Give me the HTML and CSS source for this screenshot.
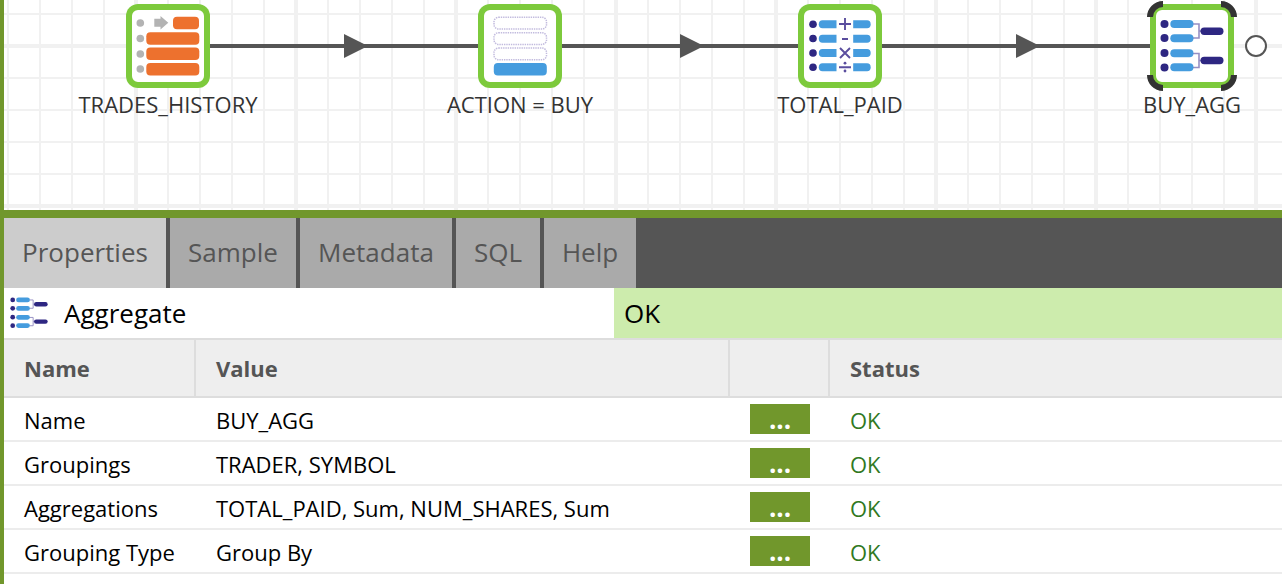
FILE: index.html
```html
<!DOCTYPE html>
<html lang="en">
<head>
<meta charset="utf-8">
<title>Aggregate</title>
<link rel="stylesheet" href="styles.css">
</head>
<body>
<svg width="0" height="0" class="defs">
  <symbol id="agg" viewBox="0 0 64 54">
    <g fill="none" stroke="#968fc4" stroke-width="1.600">
      <path d="M32.500 5H39V19H32.500M39 12H42M32.500 34.500H39V48.500H32.500M39 41.500H42"/>
    </g>
    <g fill="#2e2782">
      <circle cx="4.500" cy="5" r="4"/><circle cx="4.500" cy="19" r="4"/><circle cx="4.500" cy="34" r="4"/><circle cx="4.500" cy="48.500" r="4"/>
      <rect x="40.500" y="8.500" width="23" height="7.400" rx="3.700"/><rect x="40.500" y="37.800" width="23" height="7.400" rx="3.700"/>
    </g>
    <g fill="#459cde">
      <rect x="10.300" y="1" width="23.200" height="8" rx="4"/><rect x="10.300" y="15.300" width="23.200" height="8" rx="4"/><rect x="10.300" y="30.200" width="23.200" height="8" rx="4"/><rect x="10.300" y="44.300" width="23.200" height="8" rx="4"/>
    </g>
  </symbol>
</svg>
<div class="app">
  <div class="canvas">
    <svg class="grid" width="1278" height="210" viewBox="4 0 1278 210">
      <defs>
        <pattern id="minor" x="-8" y="-2" width="32" height="32" patternUnits="userSpaceOnUse"><path d="M15 0H17V32H15ZM0 15H32V17H0Z" fill="#f1f1f1"/></pattern>
        <pattern id="major" x="56" y="-34" width="160" height="160" patternUnits="userSpaceOnUse"><path d="M78 0H82V160H78ZM0 78H160V82H0Z" fill="#f1f1f1"/></pattern>
      </defs>
      <rect x="4" width="1278" height="210" fill="url(#minor)"/>
      <rect x="4" width="1278" height="210" fill="url(#major)"/>
      <path d="M168 46H1192" stroke="#555" stroke-width="4"/>
      <path d="M344 34L368 46L344 58ZM680 34L704 46L680 58ZM1016 34L1040 46L1016 58Z" fill="#555"/>
      <circle cx="1256" cy="46" r="10" fill="#fff" stroke="#555" stroke-width="2"/>
    </svg>
    <div class="node trades">
      <svg class="tile" width="84" height="84" viewBox="0 0 84 84">
        <g fill="#b3b3b3"><circle cx="14.300" cy="19" r="3.800"/><circle cx="14.300" cy="34.500" r="3.800"/><circle cx="14.300" cy="50" r="3.800"/><circle cx="14.300" cy="65" r="3.800"/><path d="M28.300 14.800H34.500V12L42.300 18.800L34.500 25.600V22.800H28.300Z"/></g>
        <g fill="#ed712e"><rect x="47" y="12.800" width="26" height="12.400" rx="4"/><rect x="20.300" y="28.300" width="53" height="12.400" rx="4"/><rect x="20.300" y="43.600" width="53" height="12.400" rx="4"/><rect x="20.300" y="59" width="53" height="12.400" rx="4"/></g>
      </svg>
      <span class="label">TRADES_HISTORY</span>
    </div>
    <div class="node filter">
      <svg class="tile" width="84" height="84" viewBox="0 0 84 84">
        <g fill="none" stroke="#c2bbde" stroke-width="1.500" stroke-dasharray="1.400 .9"><rect x="16" y="13.300" width="52.500" height="11.700" rx="4.500"/><rect x="16" y="28.700" width="52.500" height="11.700" rx="4.500"/><rect x="16" y="44" width="52.500" height="11.700" rx="4.500"/></g>
        <rect x="15.800" y="59" width="53" height="12.400" rx="4" fill="#459cde"/>
      </svg>
      <span class="label">ACTION = BUY</span>
    </div>
    <div class="node total">
      <svg class="tile" width="84" height="84" viewBox="0 0 84 84">
        <g fill="#2e2782"><circle cx="15" cy="20.300" r="3.800"/><circle cx="15" cy="34.500" r="3.800"/><circle cx="15" cy="49" r="3.800"/><circle cx="15" cy="63.200" r="3.800"/></g>
        <g fill="#459cde">
          <path id="l" d="M38.500 16.300H24.500Q20.800 16.300 20.800 20.300T24.500 24.300H38.500Z"/><use href="#l" y="14.500"/><use href="#l" y="28.700"/><use href="#l" y="43"/>
          <path id="r" d="M55.200 16.300H69Q72.700 16.300 72.700 20.300T69 24.300H55.200Z"/><use href="#r" y="14.500"/><use href="#r" y="28.700"/><use href="#r" y="43"/>
        </g>
        <path d="M41 20H53M47 14V26M44 35H50M42 44L52 54M52 44L42 54M41 63.200H53" fill="none" stroke="#5a4d9e" stroke-width="1.900"/>
        <circle cx="47" cy="59.200" r="1.400" fill="#5a4d9e"/><circle cx="47" cy="67" r="1.400" fill="#5a4d9e"/>
      </svg>
      <span class="label">TOTAL_PAID</span>
    </div>
    <div class="node buy">
      <svg class="tile" width="84" height="84" viewBox="0 0 84 84"><use href="#agg" x="10" y="15" width="64" height="54"/></svg>
      <svg class="selection" width="90" height="90" viewBox="0 0 90 90"><path d="M3 16A13 13 0 0 1 16 3M74 3A13 13 0 0 1 87 16M87 74A13 13 0 0 1 74 87M16 87A13 13 0 0 1 3 74" fill="none" stroke="#333" stroke-width="6"/></svg>
      <span class="label">BUY_AGG</span>
    </div>
  </div>
  <div class="tabs">
    <div class="tab active w1">Properties</div><div class="tab w2">Sample</div><div class="tab w3">Metadata</div><div class="tab w4">SQL</div><div class="tab w5">Help</div>
  </div>
  <div class="heading">
    <div class="kind"><svg width="38" height="32"><use href="#agg" width="38" height="32"/></svg><span>Aggregate</span></div>
    <div class="state">OK</div>
  </div>
  <div class="row head"><div>Name</div><div>Value</div><div></div><div>Status</div></div>
  <div class="row"><div>Name</div><div>BUY_AGG</div><div><button class="more">...</button></div><div class="ok">OK</div></div>
  <div class="row"><div>Groupings</div><div>TRADER, SYMBOL</div><div><button class="more">...</button></div><div class="ok">OK</div></div>
  <div class="row"><div>Aggregations</div><div>TOTAL_PAID, Sum, NUM_SHARES, Sum</div><div><button class="more">...</button></div><div class="ok">OK</div></div>
  <div class="row"><div>Grouping Type</div><div>Group By</div><div><button class="more">...</button></div><div class="ok">OK</div></div>
</div>
</body>
</html>
```
FILE: styles.css
```css
* { box-sizing: border-box; }
body { margin: 0; background: #fff; font-family: "Open Sans", sans-serif; font-size: 22px; color: #000; overflow: hidden; }
.defs { position: absolute; }
.app { height: 584px; border-left: 4px solid #71972c; overflow: hidden; }
.canvas { position: relative; height: 218px; border-bottom: 8px solid #71972c; overflow: hidden; }
.grid { display: block; }
.node { position: absolute; top: 4px; width: 84px; display: flex; flex-direction: column; align-items: center; }
.trades { left: 122px; }
.filter { left: 474px; }
.total { left: 794px; }
.buy { left: 1146px; }
.tile { flex: none; background: #fff; border-radius: 12px; box-shadow: inset 0 0 0 6px #7dca3c; }
.selection { position: absolute; left: -3px; top: -3px; }
.label { color: #333; line-height: 30px; margin-top: 1px; white-space: nowrap; }
.tabs { display: flex; gap: 4px; height: 70px; background: #555; }
.tab { background: #aaa; color: #555; font-size: 26px; line-height: 68px; text-align: center; white-space: nowrap; }
.tab.active { background: #ccc; }
.w1 { width: 162px; }
.w2 { width: 126px; }
.w3 { width: 152px; }
.w4 { width: 84px; }
.w5 { width: 92px; }
.heading { display: flex; height: 50px; font-size: 26px; line-height: 50px; }
.kind { width: 610px; display: flex; align-items: center; gap: 16px; padding-left: 6px; }
.state { flex: 1; padding-left: 10px; background: #cdecad; }
.row { display: grid; grid-template-columns: 192px 534px 100px 1fr; height: 44px; line-height: 44px; border-bottom: 2px solid #ececec; white-space: nowrap; }
.row > div { height: 42px; padding-left: 20px; }
.row.head { height: 60px; line-height: 56px; background: #eee; color: #555; font-weight: bold; border-top: 2px solid #ddd; border-bottom-color: #ddd; }
.row.head > div { height: 56px; }
.head > div:not(:last-child) { border-right: 2px solid #ddd; }
.more { display: block; width: 60px; height: 30px; margin-top: 6px; padding: 0; border: 0; background: #71972c; color: #fff; font: bold 26px/30px "Open Sans", sans-serif; }
.ok { color: #30791f; }
```
